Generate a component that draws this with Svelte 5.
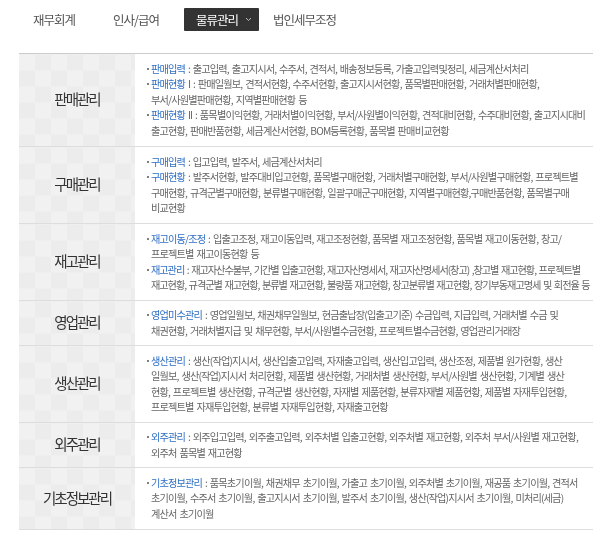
<script>
    const tabs = ["재무회계", "인사/급여", "물류관리", "법인세무조정"]

    const rows = [
        { title: "판매관리", height: 93, items: [
            { name: "판매입력", lines: [" : 출고입력, 출고지시서, 수주서, 견적서, 배송정보등록, 가출고입력및정리, 세금계산서처리"] },
            { name: "판매현황 I", lines: [" : 판매일월보, 견적서현황, 수주서현황, 출고지시서현황, 품목별판매현황, 거래처별판매현황,", "부서/사원별판매현황, 지역별판매현황 등"] },
            { name: "판매현황 II", lines: [" : 품목별이익현황, 거래처별이익현황, 부서/사원별이익현황, 견적대비현황, 수주대비현황, 출고지시대비", "출고현황, 판매반품현황, 세금계산서현황, BOM등록현황, 품목별 판매비교현황"] }
        ]},
        { title: "구매관리", height: 77, items: [
            { name: "구매입력", lines: [" : 입고입력, 발주서, 세금계산서처리"] },
            { name: "구매현황", lines: [" : 발주서현황, 발주대비입고현황, 품목별구매현황, 거래처별구매현황, 부서/사원별구매현황, 프로젝트별", "구매현황, 규격군별구매현황, 분류별구매현황, 일괄구매군구매현황, 지역별구매현황,구매반품현황, 품목별구매", "비교현황"] }
        ]},
        { title: "재고관리", height: 77, items: [
            { name: "재고이동/조정", lines: [" : 입출고조정, 재고이동입력, 재고조정현황, 품목별 재고조정현황, 품목별 재고이동현황, 창고/", "프로젝트별 재고이동현황 등"] },
            { name: "재고관리", tight: true, lines: [" : 재고자산수불부, 기간별 입출고현황, 재고자산명세서, 재고자산명세서(창고) ,창고별 재고현황, 프로젝트별", "재고현황, 규격군별 재고현황, 분류별 재고현황, 불량품 재고현황, 창고분류별 재고현황, 장기부동재고명세 및 회전율 등"] }
        ]},
        { title: "영업관리", height: 45, items: [
            { name: "영업미수관리", lines: [" : 영업일월보, 채권채무일월보, 현금출납장(입출고기준) 수금입력, 지급입력, 거래처별 수금 및", "채권현황, 거래처별지급 및 채무현황, 부서/사원별수금현황, 프로젝트별수금현황, 영업관리거래장"] }
        ]},
        { title: "생산관리", height: 77, items: [
            { name: "생산관리", lines: [" : 생산(작업)지시서, 생산입출고입력, 자재출고입력, 생산입고입력, 생산조정, 제품별 원가현황, 생산", "일월보, 생산(작업)지시서 처리현황, 제품별 생산현황, 거래처별 생산현황, 부서/사원별 생산현황, 기계별 생산", "현황, 프로젝트별 생산현황, 규격군별 생산현황, 자재별 제품현황, 분류자재별 제품현황, 제품별 자재투입현황,", "프로젝트별 자재투입현황, 분류별 자재투입현황, 자재출고현황"] }
        ]},
        { title: "외주관리", height: 45, items: [
            { name: "외주관리", lines: [" : 외주입고입력, 외주출고입력, 외주처별 입출고현황, 외주처별 재고현황, 외주처 부서/사원별 재고현황,", "외주처 품목별 재고현황"] }
        ]},
        { title: "기초정보관리", height: 62, items: [
            { name: "기초정보관리", lines: [" : 품목초기이월, 채권채무 초기이월, 가출고 초기이월, 외주처별 초기이월, 재공품 초기이월, 견적서", "초기이월, 수주서 초기이월, 출고지시서 초기이월, 발주서 초기이월, 생산(작업)지시서 초기이월, 미처리(세금)", "계산서 초기이월"] }
        ]}
    ]
</script>

<div class="page">
    <nav class="tabs">
        {#each tabs as tab, i}
            <span class="tab" class:active={i === 2}>
                {tab}
                {#if i === 2}
                    <svg width="7" height="5" viewBox="0 0 7 5"><path d="M1 1l2.5 2.5L6 1" fill="none" stroke="#bbb" stroke-width="1"/></svg>
                {/if}
            </span>
        {/each}
    </nav>

    <table>
        <tbody>
            {#each rows as row}
                <tr style={`height: ${row.height}px`}>
                    <th>{row.title}</th>
                    <td>
                        {#each row.items as item}
                            {#each item.lines as line, n}
                                <div class="line" class:tight={item.tight}>
                                    {#if n === 0}<i class="dot"></i><b>{item.name}</b>{/if}{line}
                                </div>
                            {/each}
                        {/each}
                    </td>
                </tr>
            {/each}
        </tbody>
    </table>
</div>

<style>
    :global(body) {
        background: #fff;
    }

    .page {
        width: 610px;
        height: 541px;
        overflow: hidden;
        font-family: "Noto Sans CJK KR", "Noto Sans", sans-serif;
        color: #555;
        filter: blur(0.35px);
    }

    .tabs {
        display: flex;
        align-items: center;
        height: 23px;
        padding: 8px 0 0 33px;
        margin-bottom: 22px;
        font-size: 12.5px;
        letter-spacing: -1px;
    }

    .tab {
        margin-right: 38px;
        white-space: nowrap;
    }

    .tab.active {
        display: flex;
        align-items: center;
        justify-content: center;
        box-sizing: border-box;
        gap: 7px;
        width: 75px;
        height: 23px;
        padding-left: 5px;
        margin: 0 14px 0 -13px;
        border-radius: 1px;
        background: #333;
        color: #fff;
    }

    table {
        width: 574px;
        margin-left: 19px;
        border-collapse: collapse;
        border-top: 1px solid #ccc;
        table-layout: fixed;
    }

    tr {
        border-bottom: 1px solid #ddd;
    }

    th {
        width: 116px;
        padding: 0 0 3px;
        background-color: #efefef;
        background-image: conic-gradient(#ececec 25%, #f1f1f1 0 50%, #ececec 0 75%, #f1f1f1 0);
        background-size: 32px 32px;
        font-size: 14.5px;
        font-weight: 400;
        letter-spacing: -2px;
        color: #333;
    }

    td {
        padding: 0 0 1px 16px;
    }

    .line {
        position: relative;
        font-size: 10.2px;
        line-height: 15.4px;
        letter-spacing: -0.85px;
        word-spacing: 1.4px;
        white-space: pre;
        color: #666;
    }

    .line.tight {
        letter-spacing: -1.07px;
    }

    b {
        font-weight: 400;
        color: #2f6fc4;
    }

    .dot {
        position: absolute;
        left: -4.5px;
        top: 7px;
        width: 2px;
        height: 2px;
        border-radius: 50%;
        background: #555;
    }
</style>
